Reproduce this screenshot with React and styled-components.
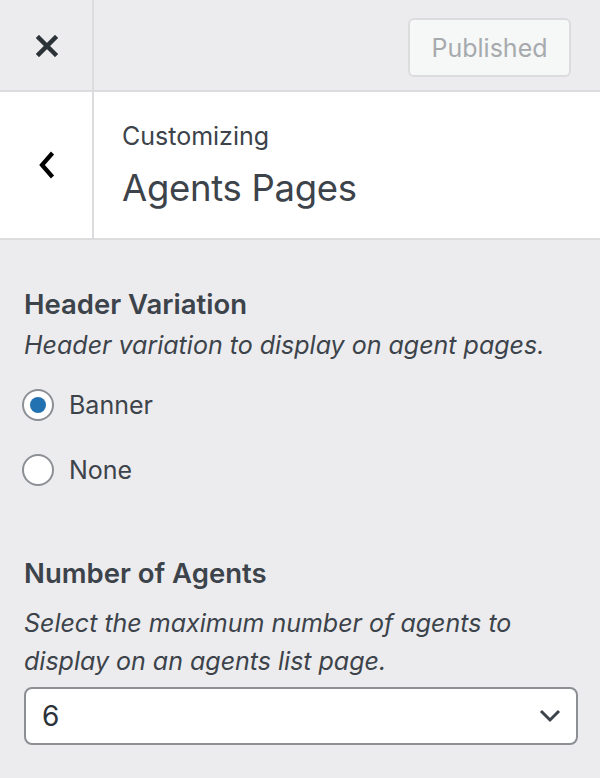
import { useState } from 'react';
import styled, { createGlobalStyle } from 'styled-components';

const GlobalStyle = createGlobalStyle`
  html, body {
    margin: 0;
    padding: 0;
    background: #ececee;
  }
  body {
    font-family: Inter, "Noto Sans", sans-serif;
    color: #3c434a;
  }
  * {
    box-sizing: border-box;
  }
`;

const Sidebar = styled.div`
  width: 600px;
  height: 778px;
  background: #ececee;
  overflow: hidden;
`;

const TopBar = styled.div`
  display: flex;
  height: 92px;
  border-bottom: 2px solid #dcdcde;
`;

const IconCell = styled.button`
  width: 94px;
  flex: none;
  display: flex;
  align-items: center;
  justify-content: center;
  padding: ${(p) => p.$offset || 0}px 0 0 2px;
  border: 0;
  border-right: 2px solid #dcdcde;
  background: transparent;
  color: ${(p) => p.$color || '#2c3338'};
  cursor: pointer;
`;

const Actions = styled.div`
  flex: 1;
  display: flex;
  align-items: center;
  justify-content: flex-end;
  padding: 0 29px 0 0;
`;

const PublishButton = styled.button`
  width: 163px;
  height: 59px;
  margin-top: 5px;
  border: 2px solid #dcdcde;
  border-radius: 6px;
  background: #f6f7f7;
  color: #a7aaad;
  font-family: Inter, "Noto Sans", sans-serif;
  font-size: 25px;
  padding: 0;
`;

const PanelHeader = styled.div`
  display: flex;
  height: 148px;
  background: #fff;
  border-bottom: 2px solid #dcdcde;
`;

const Info = styled.div`
  display: flex;
  flex-direction: column;
  justify-content: center;
  padding: 0 0 0 28px;
`;

const Eyebrow = styled.span`
  font-size: 25px;
  line-height: 36px;
  color: #3c434a;
`;

const PanelTitle = styled.h1`
  margin: 10px 0 0;
  font-size: 36.5px;
  line-height: 48px;
  font-weight: 400;
  color: #3c434a;
  letter-spacing: -0.3px;
`;

const Content = styled.div`
  padding: 44px 22px 0 24px;
`;

const Control = styled.div`
  margin: 0 0 ${(p) => p.$gap || 0}px;
`;

const ControlTitle = styled.div`
  font-size: 27.5px;
  line-height: 40px;
  font-weight: 600;
  color: #3c434a;
`;

const Description = styled.div`
  margin: ${(p) => p.$top || 2}px 0 0;
  font-size: 25px;
  line-height: 38px;
  font-style: italic;
  color: #3c434a;
`;

const RadioList = styled.div`
  display: flex;
  flex-direction: column;
  gap: 33px;
  margin: 25px 0 0 -2px;
`;

const RadioLabel = styled.label`
  display: flex;
  align-items: center;
  gap: 15px;
  font-size: 25px;
  line-height: 32px;
  cursor: pointer;
`;

const RadioCircle = styled.span`
  width: 32px;
  height: 32px;
  flex: none;
  border: 2px solid #8c8f94;
  border-radius: 50%;
  background: #fff;
  display: flex;
  align-items: center;
  justify-content: center;

  &::after {
    content: '';
    width: 16px;
    height: 16px;
    border-radius: 50%;
    background: ${(p) => (p.$checked ? '#2271b1' : 'transparent')};
  }
`;

const SelectBox = styled.div`
  margin: 7px 0 0;
  height: 58px;
  border: 2px solid #8c8f94;
  border-radius: 8px;
  background: #fff;
  display: flex;
  align-items: center;
  justify-content: space-between;
  padding: 0 15px 0 16px;
  font-size: 28px;
  color: #2c3338;
`;

const CloseIcon = () => (
  <svg width="22" height="22" viewBox="0 0 22 22">
    <path d="M3 3 L19 19 M19 3 L3 19" stroke="currentColor" strokeWidth="4.5" strokeLinecap="square" />
  </svg>
);

const BackIcon = () => (
  <svg width="20" height="30" viewBox="0 0 20 30">
    <path d="M15.5 3 L5 15 L15.5 27" fill="none" stroke="currentColor" strokeWidth="4.2" />
  </svg>
);

const ChevronDown = () => (
  <svg width="22" height="14" viewBox="0 0 22 14">
    <path d="M2 2 L11 11 L20 2" fill="none" stroke="#3c434a" strokeWidth="3" />
  </svg>
);

const options = ['Banner', 'None'];

export default function App() {
  const [variation, setVariation] = useState('Banner');

  return (
    <>
      <GlobalStyle />
      <Sidebar>
        <TopBar>
          <IconCell aria-label="Close" $offset={2}>
            <CloseIcon />
          </IconCell>
          <Actions>
            <PublishButton disabled>Published</PublishButton>
          </Actions>
        </TopBar>
        <PanelHeader>
          <IconCell $color="#000" aria-label="Back">
            <BackIcon />
          </IconCell>
          <Info>
            <Eyebrow>Customizing</Eyebrow>
            <PanelTitle>Agents Pages</PanelTitle>
          </Info>
        </PanelHeader>
        <Content>
          <Control $gap={67}>
            <ControlTitle>Header Variation</ControlTitle>
            <Description>Header variation to display on agent pages.</Description>
            <RadioList>
              {options.map((opt) => (
                <RadioLabel key={opt} onClick={() => setVariation(opt)}>
                  <RadioCircle $checked={variation === opt} />
                  {opt}
                </RadioLabel>
              ))}
            </RadioList>
          </Control>
          <Control>
            <ControlTitle>Number of Agents</ControlTitle>
            <Description $top={11}>
              Select the maximum number of agents to display on an agents list page.
            </Description>
            <SelectBox>
              <span>6</span>
              <ChevronDown />
            </SelectBox>
          </Control>
        </Content>
      </Sidebar>
    </>
  );
}
